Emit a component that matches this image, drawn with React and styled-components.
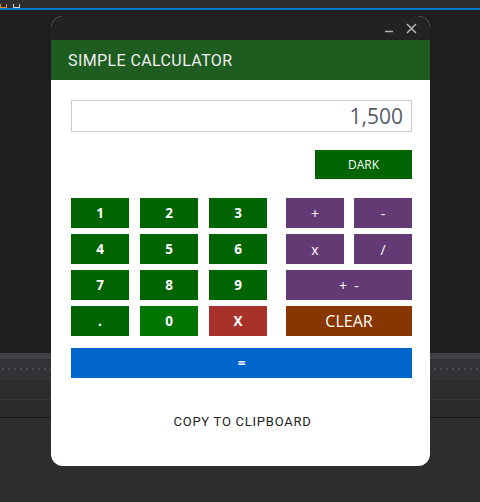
import React from 'react';
import styled, { createGlobalStyle } from 'styled-components';

const Global = createGlobalStyle`
  html, body { margin: 0; padding: 0; background: #1e1e1e; }
  body { width: 480px; height: 502px; overflow: hidden; font-family: Roboto, "Liberation Sans", sans-serif; }
`;

const Desktop = styled.div`
  position: relative;
  width: 480px;
  height: 502px;
  display: flex;
  flex-direction: column;
  background: #2d2d30;
`;

const TopStrip = styled.div`
  height: 8px;
  background: #2d2d30;
  display: flex;
  gap: 6px;
  align-items: flex-end;
  overflow: hidden;
`;

const TinyIcon = styled.span`
  width: 5px;
  height: 3px;
  border: 1px solid ${p => p.color};
  border-top: none;
`;

const AccentLine = styled.div`
  height: 2px;
  background: #007acc;
`;

const Band = styled.div`
  height: ${p => p.h}px;
  background: ${p => p.bg};
  border-bottom: ${p => p.line ? `1px solid ${p.line}` : 'none'};
  ${p => p.dots && `
    background-image: radial-gradient(circle, #4a4a50 0.8px, transparent 1px);
    background-size: 6px 4px;
    background-position: 0 8px;
    background-repeat: repeat-x;
  `}
`;

const Window = styled.div`
  position: absolute;
  left: 51px;
  top: 16px;
  width: 379px;
  height: 450px;
  border-radius: 12px;
  overflow: hidden;
  background: #fff;
  display: flex;
  flex-direction: column;
`;

const TitleBar = styled.div`
  height: 24px;
  background: #222222;
  display: flex;
  justify-content: flex-end;
  align-items: center;
  gap: 12px;
  padding-right: 13px;
`;

const Header = styled.div`
  height: 40px;
  background: #1e5c20;
  color: #f0f0f0;
  display: flex;
  align-items: center;
  padding-left: 17px;
  font-size: 16px;
  letter-spacing: 0.4px;
`;

const Body = styled.div`
  flex: 1;
  padding: 20px 18px 0 20px;
  display: flex;
  flex-direction: column;
`;

const Display = styled.div`
  height: 30px;
  border: 1px solid #cccccc;
  display: flex;
  align-items: center;
  justify-content: flex-end;
  padding-right: 8px;
  font-family: "Open Sans", sans-serif;
  font-size: 21px;
  color: #555c68;
`;

const ThemeRow = styled.div`
  display: flex;
  justify-content: flex-end;
  margin-top: 18px;
`;

const Key = styled.div`
  height: ${p => p.tall || 30}px;
  background: ${p => p.bg};
  color: #fff;
  display: flex;
  align-items: center;
  justify-content: center;
  font-family: "Open Sans", sans-serif;
  font-size: ${p => p.size || 13.5}px;
  font-weight: ${p => p.bold ? 700 : 400};
  grid-column: ${p => p.span ? '1 / span 2' : 'auto'};
  white-space: pre;
`;

const ThemeKey = styled(Key)`
  width: 97px;
`;

const Keypad = styled.div`
  display: flex;
  gap: 19px;
  margin-top: 19px;
`;

const Digits = styled.div`
  display: grid;
  grid-template-columns: repeat(3, 58px);
  column-gap: 11px;
  row-gap: 6px;
`;

const Ops = styled.div`
  display: grid;
  grid-template-columns: repeat(2, 58px);
  column-gap: 10px;
  row-gap: 6px;
`;

const Equals = styled(Key)`
  margin-top: 12px;
`;

const Copy = styled.div`
  margin-top: 36px;
  text-align: center;
  font-size: 13px;
  font-weight: 400;
  letter-spacing: 0.75px;
  color: #222222;
  padding-left: 2px;
`;

const GREEN = '#006400';
const PURPLE = '#633a73';

const digits = ['1', '2', '3', '4', '5', '6', '7', '8', '9', '.'];

export default function App() {
  return (
    <Desktop>
      <Global />
      <TopStrip>
        <TinyIcon color="#d98b2b" />
        <TinyIcon color="#cfcfcf" />
      </TopStrip>
      <AccentLine />
      <Band h={344} bg="#1e1e1e" />
      <Band h={6} bg="#3f3f46" />
      <Band h={21} bg="#333337" dots />
      <Band h={19} bg="#2d2d30" line="#38383c" />
      <Band h={17} bg="#2b2b2e" line="#19191a" />
      <Band h={84} bg="#2d2d30" />

      <Window>
        <TitleBar>
          <svg width="10" height="10" viewBox="0 0 10 10">
            <path d="M1 8.5h8" stroke="#b5b5b5" strokeWidth="1.6" />
          </svg>
          <svg width="11" height="11" viewBox="0 0 11 11">
            <path d="M1 1l9 9M10 1l-9 9" stroke="#b5b5b5" strokeWidth="1.6" />
          </svg>
        </TitleBar>
        <Header>SIMPLE CALCULATOR</Header>
        <Body>
          <Display>1,500</Display>
          <ThemeRow>
            <ThemeKey bg={GREEN} size={12} tall={29}>DARK</ThemeKey>
          </ThemeRow>
          <Keypad>
            <Digits>
              {digits.map(d => (
                <Key key={d} bg={GREEN} bold>{d}</Key>
              ))}
              <Key bg="#007500" bold>0</Key>
              <Key bg="#a8322b" bold>X</Key>
            </Digits>
            <Ops>
              <Key bg={PURPLE} size={14}>+</Key>
              <Key bg={PURPLE} size={14}>-</Key>
              <Key bg={PURPLE} size={14}>x</Key>
              <Key bg={PURPLE} size={14}>/</Key>
              <Key bg={PURPLE} size={14} span>{'+  -'}</Key>
              <Key bg="#883600" size={16} span>CLEAR</Key>
            </Ops>
          </Keypad>
          <Equals bg="#0066cc" bold>=</Equals>
          <Copy>COPY TO CLIPBOARD</Copy>
        </Body>
      </Window>
    </Desktop>
  );
}
